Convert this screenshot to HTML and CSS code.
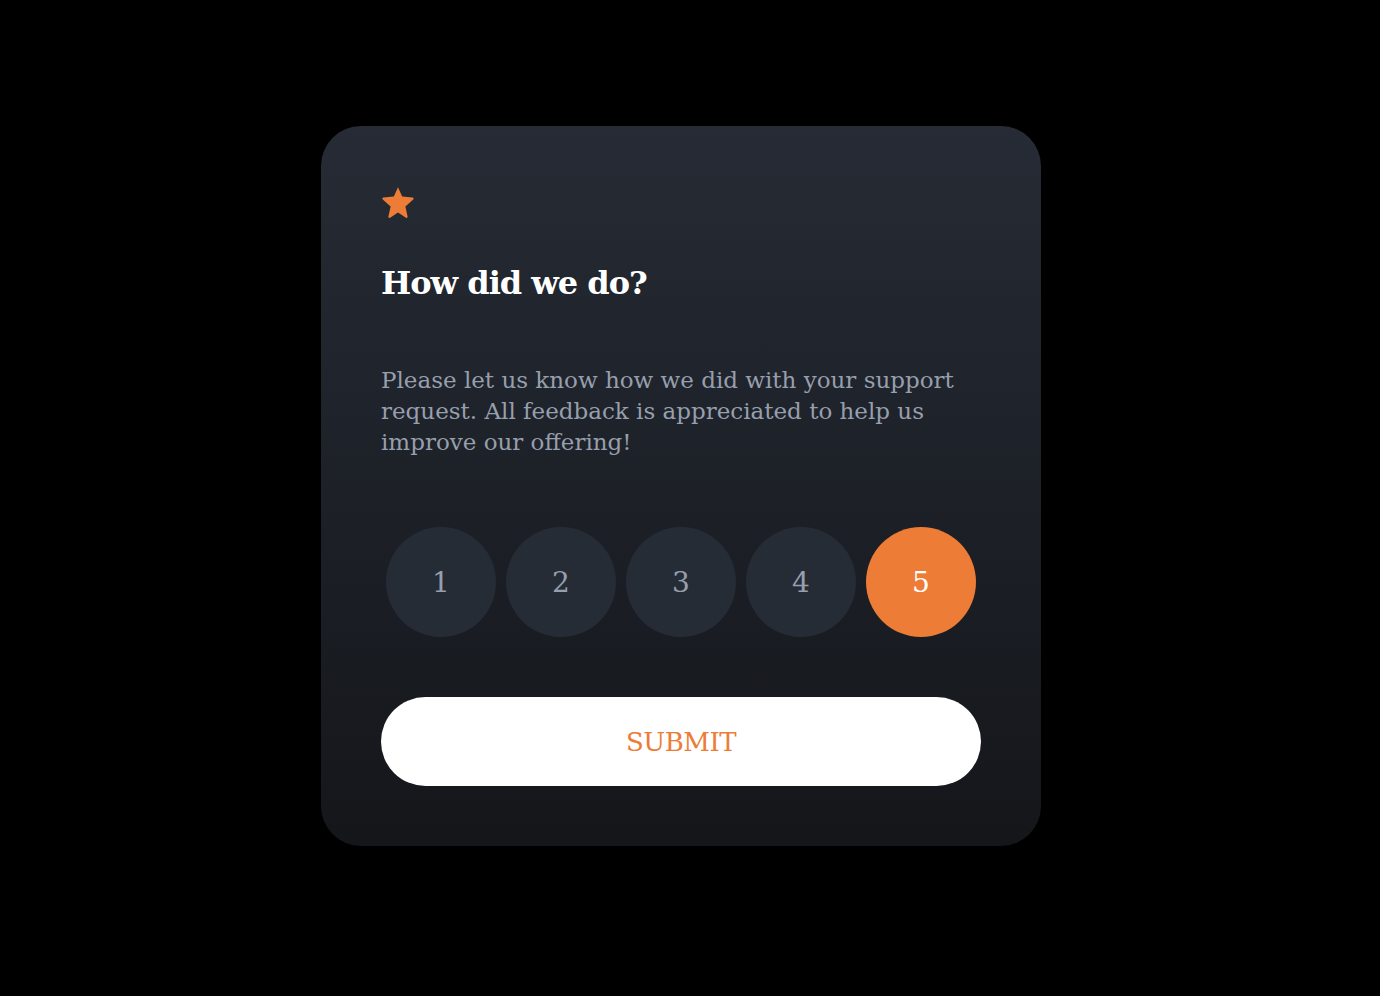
FILE: index.html
```html
<!DOCTYPE html>
<html lang="en">
<head>
<meta charset="utf-8">
<title>Rating</title>
<link rel="stylesheet" href="styles.css">
</head>
<body>
<main class="card">
  <div class="star">
    <svg width="34" height="33" viewBox="0 0 34 33"><path d="M17 1.2 L21.2 10.6 L31.6 11.6 C32.6 11.7 33 12.9 32.2 13.6 L24.4 20.4 L26.6 30.6 C26.8 31.6 25.8 32.3 24.9 31.8 L17 26.6 L9.1 31.8 C8.2 32.3 7.2 31.6 7.4 30.6 L9.6 20.4 L1.8 13.6 C1 12.9 1.4 11.7 2.4 11.6 L12.8 10.6 Z" fill="#ec7c36"/></svg>
  </div>
  <h1 class="title">How did we do?</h1>
  <p class="text">Please let us know how we did with your support request. All feedback is appreciated to help us improve our offering!</p>
  <div class="ratings">
    <button class="rate">1</button>
    <button class="rate">2</button>
    <button class="rate">3</button>
    <button class="rate">4</button>
    <button class="rate active">5</button>
  </div>
  <button class="submit">SUBMIT</button>
</main>
</body>
</html>
```
FILE: styles.css
```css
html, body {
  margin: 0;
  padding: 0;
  background: #000;
  height: 100%;
}
body {
  padding: 126px 0 0 321px;
  box-sizing: border-box;
  font-family: "DejaVu Serif", "Liberation Serif", serif;
}
.card {
  width: 720px;
  height: 720px;
  box-sizing: border-box;
  padding: 60px;
  border-radius: 40px;
  background: linear-gradient(180deg, #262b35 0%, #14161a 100%);
  display: flex;
  flex-direction: column;
}
.star {
  height: 33px;
  display: flex;
}
.title {
  margin: 42px 0 0;
  color: #fff;
  font-size: 32px;
  font-weight: 700;
  line-height: 44px;
  letter-spacing: -1px;
}
.text {
  margin: 60px 0 0;
  color: #969fad;
  font-size: 23px;
  line-height: 31px;
}
.ratings {
  margin-top: 69px;
  display: flex;
  justify-content: center;
  gap: 10px;
}
.rate {
  width: 110px;
  height: 110px;
  border-radius: 50%;
  border: none;
  background: #262c36;
  color: #969fad;
  font-family: inherit;
  font-size: 28px;
  padding: 0;
}
.rate.active {
  background: #ec7c36;
  color: #fff;
}
.submit {
  margin-top: 60px;
  height: 89px;
  border: none;
  border-radius: 45px;
  background: #fff;
  color: #ec7c36;
  font-family: inherit;
  font-size: 26px;
  letter-spacing: -0.5px;
}
```
